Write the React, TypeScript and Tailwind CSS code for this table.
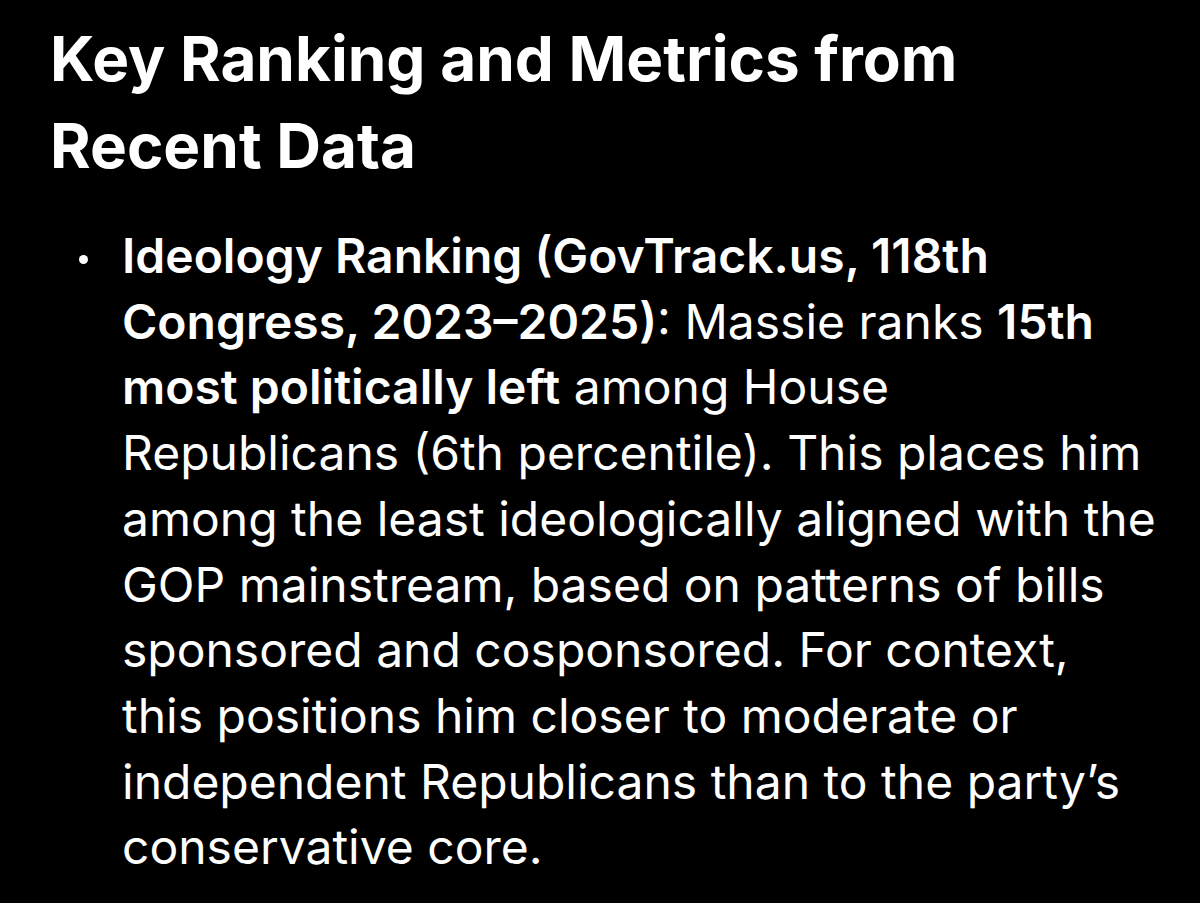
export default function App() {
  return (
    <div className="min-h-[903px] w-full bg-black text-white" style={{ fontFamily: "Inter, 'Noto Sans', sans-serif" }}>
      <div className="pl-[50px] pt-[15px]">
        <h1 className="text-[62px] font-bold leading-[87px]">
          Key Ranking and Metrics from
          <br />
          Recent Data
        </h1>
        <ul className="mt-[34px]">
          <li className="flex text-[48px] leading-[65.7px]">
            <span className="w-[72px] shrink-0">
              <span className="ml-[29px] mt-[32px] block h-[9px] w-[9px] rounded-full bg-white" />
            </span>
            <p className="whitespace-nowrap">
              <strong className="font-semibold">Ideology Ranking (GovTrack.us, 118th</strong>
              <br />
              <strong className="font-semibold">Congress, 2023–2025)</strong>: Massie ranks <strong className="font-semibold">15th</strong>
              <br />
              <strong className="font-semibold">most politically left</strong> among House
              <br />
              Republicans (6th percentile). This places him
              <br />
              among the least ideologically aligned with the
              <br />
              GOP mainstream, based on patterns of bills
              <br />
              sponsored and cosponsored. For context,
              <br />
              this positions him closer to moderate or
              <br />
              independent Republicans than to the party’s
              <br />
              conservative core.
            </p>
          </li>
        </ul>
      </div>
    </div>
  );
}
